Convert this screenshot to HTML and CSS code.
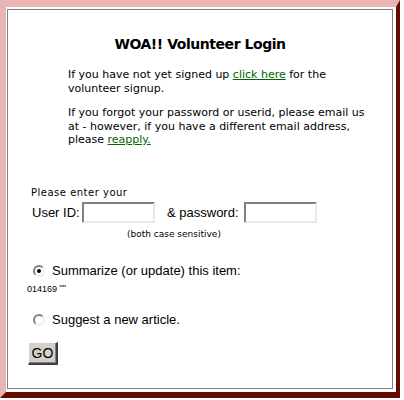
FILE: index.html
```html
<!DOCTYPE html>
<html>
<head>
<meta charset="utf-8">
<link rel="stylesheet" href="styles.css">
</head>
<body>
<div class="frame">
  <div class="panel">
    <h1 class="title">WOA!! Volunteer Login</h1>
    <p class="note">If you have not yet signed up <a href="#">click here</a> for the volunteer signup.</p>
    <p class="note note2">If you forgot your password or userid, please email us at - however, if you have a different email address, please <a href="#">reapply.</a></p>
    <div class="prompt">Please enter your</div>
    <div class="login-row">
      <span class="label">User ID:</span>
      <span class="field"></span>
      <span class="label pw">&amp; password:</span>
      <span class="field"></span>
    </div>
    <div class="case">(both case sensitive)</div>
    <div class="option first">
      <span class="radio checked"></span>
      <span class="opt-text">Summarize (or update) this item:</span>
    </div>
    <div class="item-id">014169 <span class="quotes">""</span></div>
    <div class="option second">
      <span class="radio"></span>
      <span class="opt-text">Suggest a new article.</span>
    </div>
    <div class="go"><span class="go-btn">GO</span></div>
  </div>
</div>
</body>
</html>
```

FILE: styles.css
```css
html, body {
  margin: 0;
  padding: 0;
  background: #ffffff;
}
.frame {
  box-sizing: border-box;
  width: 400px;
  height: 398px;
  border-style: solid;
  border-width: 7px 4px 6px 6px;
  border-color: #e8b4b4 #660a00 #660a00 #e8b4b4;
  padding: 2px 3px 3px 1px;
}
.panel {
  box-sizing: border-box;
  height: 100%;
  border: 1px solid #808080;
  color: #000;
}
.title {
  margin: 24px 0 0 0;
  font-family: "DejaVu Sans", sans-serif;
  font-weight: bold;
  font-size: 14px;
  line-height: 20px;
  text-align: center;
  letter-spacing: -0.45px;
}
.note {
  margin: 14px 0 0 60px;
  width: 302px;
  font-family: "DejaVu Sans", sans-serif;
  font-size: 11px;
  line-height: 13.5px;
}
.note2 {
  margin-top: 11px;
}
.note a {
  color: #006600;
  text-decoration: underline;
}
.prompt {
  margin: 39px 0 0 23px;
  font-family: "DejaVu Sans", sans-serif;
  font-size: 10px;
  letter-spacing: 0.5px;
  line-height: 13px;
}
.login-row {
  margin: 3px 0 0 24px;
  display: flex;
  align-items: center;
  height: 21px;
  font-family: "Liberation Sans", Arial, sans-serif;
  font-size: 13px;
}
.label {
  width: 50px;
}
.label.pw {
  width: auto;
  margin-left: 12px;
  margin-right: 5px;
}
.field {
  box-sizing: border-box;
  display: block;
  width: 73px;
  height: 21px;
  border-style: solid;
  border-width: 2px;
  border-color: #808080 #e8e8e8 #e8e8e8 #808080;
  background: #fff;
}
.case {
  margin: 6px 0 0 119px;
  font-family: "DejaVu Sans", sans-serif;
  font-size: 9px;
  line-height: 11px;
}
.option {
  display: flex;
  align-items: center;
  height: 16px;
  margin-left: 25px;
  font-family: "Liberation Sans", Arial, sans-serif;
  font-size: 13px;
}
.option.first {
  margin-top: 23px;
}
.option.second {
  margin-top: 17px;
}
.radio {
  box-sizing: border-box;
  display: flex;
  align-items: center;
  justify-content: center;
  width: 12px;
  height: 12px;
  border-radius: 50%;
  border: 2px solid;
  border-color: #808080 #eeeeee #eeeeee #808080;
  background: #fff;
  margin-right: 7px;
}
.radio.checked::after {
  content: "";
  width: 4px;
  height: 4px;
  border-radius: 50%;
  background: #000;
}
.item-id {
  margin: 4px 0 0 19px;
  font-family: "Liberation Sans", Arial, sans-serif;
  font-size: 9px;
  line-height: 11px;
}
.quotes {
  font-size: 9px;
  vertical-align: 1px;
}
.go {
  margin: 14px 0 0 20px;
}
.go-btn {
  box-sizing: border-box;
  display: inline-flex;
  align-items: center;
  justify-content: center;
  width: 30px;
  height: 23px;
  background: #d4d0c8;
  border-style: solid;
  border-width: 1px 2px 2px 1px;
  border-color: #ffffff #404040 #404040 #ffffff;
  box-shadow: inset -1px -1px 0 #808080;
  font-family: "Liberation Sans", Arial, sans-serif;
  font-size: 14px;
}
```
